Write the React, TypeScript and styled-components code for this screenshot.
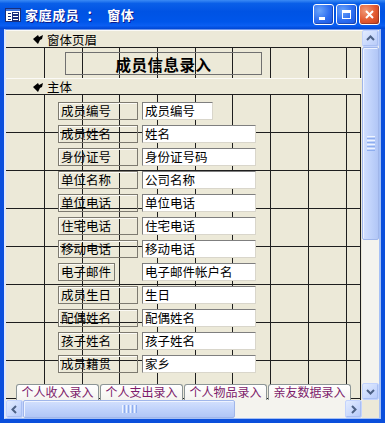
import React from 'react'
import styled, { createGlobalStyle } from 'styled-components'

const GlobalStyle = createGlobalStyle`
	html, body {
		margin: 0;
		padding: 0;
		background: #ffffff;
	}
`

const CJK = `'Noto Sans CJK SC', 'Noto Sans', sans-serif`
const BEIGE = '#ece9d8'
const INK = '#1e1e1e'

// design grid drawn as 1px background lines at fixed offsets
const gridLines = (xs: number[], ys: number[], width: number) => {
	const imgs = [...xs, ...ys].map(() => `linear-gradient(${INK}, ${INK})`)
	const sizes = [...xs.map(() => '1px 100%'), ...ys.map(() => `${width}px 1px`)]
	const pos = [...xs.map((x) => `${x}px 0`), ...ys.map((y) => `0 ${y}px`)]
	return `
		background-color: ${BEIGE};
		background-image: ${imgs.join(', ')};
		background-size: ${sizes.join(', ')};
		background-position: ${pos.join(', ')};
		background-repeat: no-repeat;
	`
}

const COLS = [38, 76, 113, 151, 189, 226, 264, 302, 340, 354]

const Window = styled.div`
	width: 385px;
	height: 423px;
	display: flex;
	flex-direction: column;
	background: #0b4fdc;
	font-family: ${CJK};
	overflow: hidden;
`

const TitleBar = styled.div`
	height: 29px;
	flex: none;
	display: flex;
	align-items: center;
	padding: 0 5px 0 5px;
	box-sizing: border-box;
	background: linear-gradient(
		to bottom,
		#3b8bf5 0%,
		#0a5fe8 12%,
		#0053e4 40%,
		#0056ea 75%,
		#0a5ef2 88%,
		#0046d4 100%
	);
`

const TitleIcon = styled.svg`
	width: 16px;
	height: 14px;
	flex: none;
`

const TitleText = styled.div`
	margin-left: 4px;
	flex: 1;
	color: #ffffff;
	font-size: 13px;
	font-weight: 700;
	letter-spacing: 0.6px;
	text-shadow: 1px 1px 0 #0a1a8c;
	white-space: pre;
`

const CaptionButtons = styled.div`
	display: flex;
	gap: 2px;
`

const CaptionButton = styled.div<{ $close?: boolean }>`
	width: 21px;
	height: 21px;
	box-sizing: border-box;
	border: 1px solid #ffffff;
	border-radius: 3px;
	display: flex;
	align-items: center;
	justify-content: center;
	background: ${(p) =>
		p.$close
			? 'radial-gradient(circle at 30% 30%, #f09a78 0%, #e2582f 55%, #c3401d 100%)'
			: 'radial-gradient(circle at 30% 30%, #6aa4fa 0%, #2c6cf0 55%, #1a55dd 100%)'};
	box-shadow: inset -1px -1px 0 rgba(0, 0, 40, 0.25);
`

const Frame = styled.div`
	flex: 1;
	display: flex;
	padding: 0 4px 4px 4px;
	min-height: 0;
`

const Client = styled.div`
	flex: 1;
	display: flex;
	border-style: solid;
	border-color: #6f95e8 #a6c0f5 #a6c0f5 #dfe8fb;
	border-width: 1px 2px 1px 2px;
	background: ${BEIGE};
`

const FormColumn = styled.div`
	width: 356px;
	flex: none;
	display: flex;
	flex-direction: column;
`

const Canvas = styled.div`
	flex: 1;
	display: flex;
	flex-direction: column;
	overflow: hidden;
	background: ${BEIGE};
`

const SectionBar = styled.div<{ $h: number }>`
	height: ${(p) => p.$h}px;
	flex: none;
	display: flex;
	align-items: center;
	gap: 3px;
	padding-left: 27px;
	box-sizing: border-box;
	background: ${BEIGE};
	border-top: 1px solid #fbfaf6;
	font-size: 12.5px;
	color: #000;
`

const SectionArrow = styled.svg`
	width: 11px;
	height: 10px;
	flex: none;
`

const HeaderGrid = styled.div`
	height: 31px;
	flex: none;
	box-sizing: border-box;
	padding: 5px 0 0 59px;
	${gridLines(COLS, [0], 355)}
`

const TitleLabel = styled.div`
	width: 197px;
	height: 23px;
	box-sizing: border-box;
	border: 1px solid #707070;
	display: flex;
	align-items: center;
	justify-content: center;
	font-size: 15.5px;
	font-weight: 700;
	color: #000;
	letter-spacing: 0.5px;
`

const BodyGrid = styled.div`
	flex: 1;
	display: flex;
	flex-direction: column;
	padding-top: 8px;
	${gridLines(COLS, [0, 38, 76, 114, 152, 190, 228, 266, 304], 355)}
`

const Fields = styled.div`
	display: flex;
	flex-direction: column;
	gap: 5px;
	padding-left: 52px;
`

const FieldRow = styled.div`
	display: grid;
	grid-template-columns: 84px auto;
	height: 18px;
`

const FieldLabel = styled.div<{ $w: number }>`
	width: ${(p) => p.$w}px;
	height: 18px;
	box-sizing: border-box;
	border: 1px solid #7d7a70;
	box-shadow: inset 1px 1px 0 #fbfaf5;
	padding-left: 2px;
	font-size: 12.5px;
	line-height: 16px;
	color: #000;
	white-space: nowrap;
	overflow: hidden;
`

const FieldBox = styled.div<{ $w: number }>`
	width: ${(p) => p.$w}px;
	height: 18px;
	box-sizing: border-box;
	background: #ffffff;
	border-style: solid;
	border-width: 1px;
	border-color: #7f7f7f #d9d6cb #d9d6cb #7f7f7f;
	padding-left: 2px;
	font-size: 12.5px;
	line-height: 16px;
	color: #000;
	white-space: nowrap;
	overflow: hidden;
`

const TabStrip = styled.div`
	margin-top: auto;
	height: 16px;
	display: flex;
	gap: 1px;
	padding-left: 10px;
`

const Tab = styled.div`
	width: 83px;
	height: 16px;
	box-sizing: border-box;
	border: 1px solid #8c9596;
	border-bottom: none;
	border-radius: 3px 3px 0 0;
	background: linear-gradient(to bottom, #ffffff, #f4f3ee);
	font-size: 12px;
	line-height: 14px;
	text-align: center;
	color: #7d1b6a;
	white-space: nowrap;
	overflow: hidden;
`

const HScroll = styled.div`
	height: 18px;
	flex: none;
	display: flex;
	background: #f4f3ee;
`

const VColumn = styled.div`
	width: 17px;
	flex: none;
	display: flex;
	flex-direction: column;
`

const VScroll = styled.div`
	flex: 1;
	display: flex;
	flex-direction: column;
	background: #f4f3ee;
`

const Corner = styled.div`
	height: 18px;
	flex: none;
	background: ${BEIGE};
`

const ArrowButton = styled.div`
	width: 17px;
	height: 17px;
	flex: none;
	box-sizing: border-box;
	border: 1px solid #c3d3fd;
	border-radius: 2px;
	background: linear-gradient(135deg, #e3ecfe 0%, #c7d7fd 60%, #b6c9f7 100%);
	display: flex;
	align-items: center;
	justify-content: center;
	box-shadow: inset -1px -1px 0 #a9bff2;
`

const HArrowButton = styled(ArrowButton)`
	height: 18px;
`

const Thumb = styled.div<{ $vertical?: boolean }>`
	flex: none;
	box-sizing: border-box;
	border: 1px solid #a0b6ea;
	border-radius: 2px;
	background: ${(p) =>
		p.$vertical
			? 'linear-gradient(to right, #d3e0fd, #c1d3fb 50%, #b1c6f6)'
			: 'linear-gradient(to bottom, #d3e0fd, #c1d3fb 50%, #b1c6f6)'};
	box-shadow: inset 1px 1px 0 #eef3ff;
	display: flex;
	align-items: center;
	justify-content: center;
	flex-direction: ${(p) => (p.$vertical ? 'column' : 'row')};
	gap: 1px;
`

const Grip = styled.div<{ $vertical?: boolean; $light?: boolean }>`
	width: ${(p) => (p.$vertical ? '8px' : '1px')};
	height: ${(p) => (p.$vertical ? '1px' : '8px')};
	background: ${(p) => (p.$light ? '#eef4fe' : '#8eaef0')};
`

const Chevron = ({ dir }: { dir: 'up' | 'down' | 'left' | 'right' }) => {
	const pts = {
		up: '1,6 4.5,2.5 8,6',
		down: '1,3 4.5,6.5 8,3',
		left: '6,1 2.5,4.5 6,8',
		right: '3,1 6.5,4.5 3,8',
	}[dir]
	return (
		<svg width="9" height="9" viewBox="0 0 9 9">
			<polyline points={pts} fill="none" stroke="#4d6185" strokeWidth="2" />
		</svg>
	)
}

const Grips = ({ vertical }: { vertical?: boolean }) => (
	<>
		{[0, 1, 2, 3, 4, 5, 6, 7].map((i) => (
			<Grip key={i} $vertical={vertical} $light={i % 2 === 0} />
		))}
	</>
)

const Arrow = () => (
	<SectionArrow viewBox="0 0 11 10">
		<polygon points="0,5 5,1 6,3 10,1 9,5 7,6 5,10" fill="#000" />
	</SectionArrow>
)

const fields: { label: string; value: string; lw?: number; bw?: number }[] = [
	{ label: '成员编号', value: '成员编号', bw: 71 },
	{ label: '成员姓名', value: '姓名' },
	{ label: '身份证号', value: '身份证号码' },
	{ label: '单位名称', value: '公司名称' },
	{ label: '单位电话', value: '单位电话' },
	{ label: '住宅电话', value: '住宅电话' },
	{ label: '移动电话', value: '移动电话' },
	{ label: '电子邮件', value: '电子邮件帐户名', lw: 57 },
	{ label: '成员生日', value: '生日' },
	{ label: '配偶姓名', value: '配偶姓名' },
	{ label: '孩子姓名', value: '孩子姓名' },
	{ label: '成员籍贯', value: '家乡' },
]

const tabs = ['个人收入录入', '个人支出录入', '个人物品录入', '亲友数据录入']

const FormWindow = () => (
	<Window>
		<TitleBar>
			<TitleIcon viewBox="0 0 16 14">
				<rect x="0.5" y="0.5" width="15" height="13" fill="#ffffff" stroke="#1a2f7a" />
				<rect x="1" y="1" width="14" height="2" fill="#3a6fd8" />
				<rect x="3" y="5" width="3" height="1" fill="#1a2f7a" />
				<rect x="3" y="8" width="3" height="1" fill="#1a2f7a" />
				<rect x="3" y="11" width="3" height="1" fill="#1a2f7a" />
				<rect x="7.5" y="4.5" width="6" height="2" fill="#fff" stroke="#1a2f7a" />
				<rect x="7.5" y="7.5" width="6" height="2" fill="#fff" stroke="#1a2f7a" />
				<rect x="7.5" y="10.5" width="6" height="2" fill="#fff" stroke="#1a2f7a" />
			</TitleIcon>
			<TitleText>{'家庭成员  ：  窗体'}</TitleText>
			<CaptionButtons>
				<CaptionButton>
					<svg width="13" height="13" viewBox="0 0 13 13">
						<rect x="2" y="9" width="6" height="3" fill="#ffffff" />
					</svg>
				</CaptionButton>
				<CaptionButton>
					<svg width="13" height="13" viewBox="0 0 13 13">
						<rect x="2.5" y="2.5" width="8" height="8" fill="none" stroke="#ffffff" />
						<rect x="2" y="2" width="9" height="3" fill="#ffffff" />
					</svg>
				</CaptionButton>
				<CaptionButton $close>
					<svg width="13" height="13" viewBox="0 0 13 13">
						<path d="M3 3 L10 10 M10 3 L3 10" stroke="#ffffff" strokeWidth="2" />
					</svg>
				</CaptionButton>
			</CaptionButtons>
		</TitleBar>
		<Frame>
			<Client>
				<FormColumn>
					<Canvas>
						<SectionBar $h={17}>
							<Arrow />
							窗体页眉
						</SectionBar>
						<HeaderGrid>
							<TitleLabel>成员信息录入</TitleLabel>
						</HeaderGrid>
						<SectionBar $h={16}>
							<Arrow />
							主体
						</SectionBar>
						<BodyGrid>
							<Fields>
								{fields.map((f) => (
									<FieldRow key={f.label}>
										<FieldLabel $w={f.lw ?? 80}>{f.label}</FieldLabel>
										<FieldBox $w={f.bw ?? 114}>{f.value}</FieldBox>
									</FieldRow>
								))}
							</Fields>
							<TabStrip>
								{tabs.map((t) => (
									<Tab key={t}>{t}</Tab>
								))}
							</TabStrip>
						</BodyGrid>
					</Canvas>
					<HScroll>
						<HArrowButton>
							<Chevron dir="left" />
						</HArrowButton>
						<Thumb style={{ width: 212, height: 18 }}>
							<Grips />
						</Thumb>
						<div style={{ flex: 1 }} />
						<HArrowButton>
							<Chevron dir="right" />
						</HArrowButton>
					</HScroll>
				</FormColumn>
				<VColumn>
					<VScroll>
						<ArrowButton>
							<Chevron dir="up" />
						</ArrowButton>
						<Thumb $vertical style={{ height: 193, width: 17 }}>
							<Grips vertical />
						</Thumb>
						<div style={{ flex: 1 }} />
						<ArrowButton>
							<Chevron dir="down" />
						</ArrowButton>
					</VScroll>
					<Corner />
				</VColumn>
			</Client>
		</Frame>
	</Window>
)

export default function App() {
	return (
		<>
			<GlobalStyle />
			<FormWindow />
		</>
	)
}
